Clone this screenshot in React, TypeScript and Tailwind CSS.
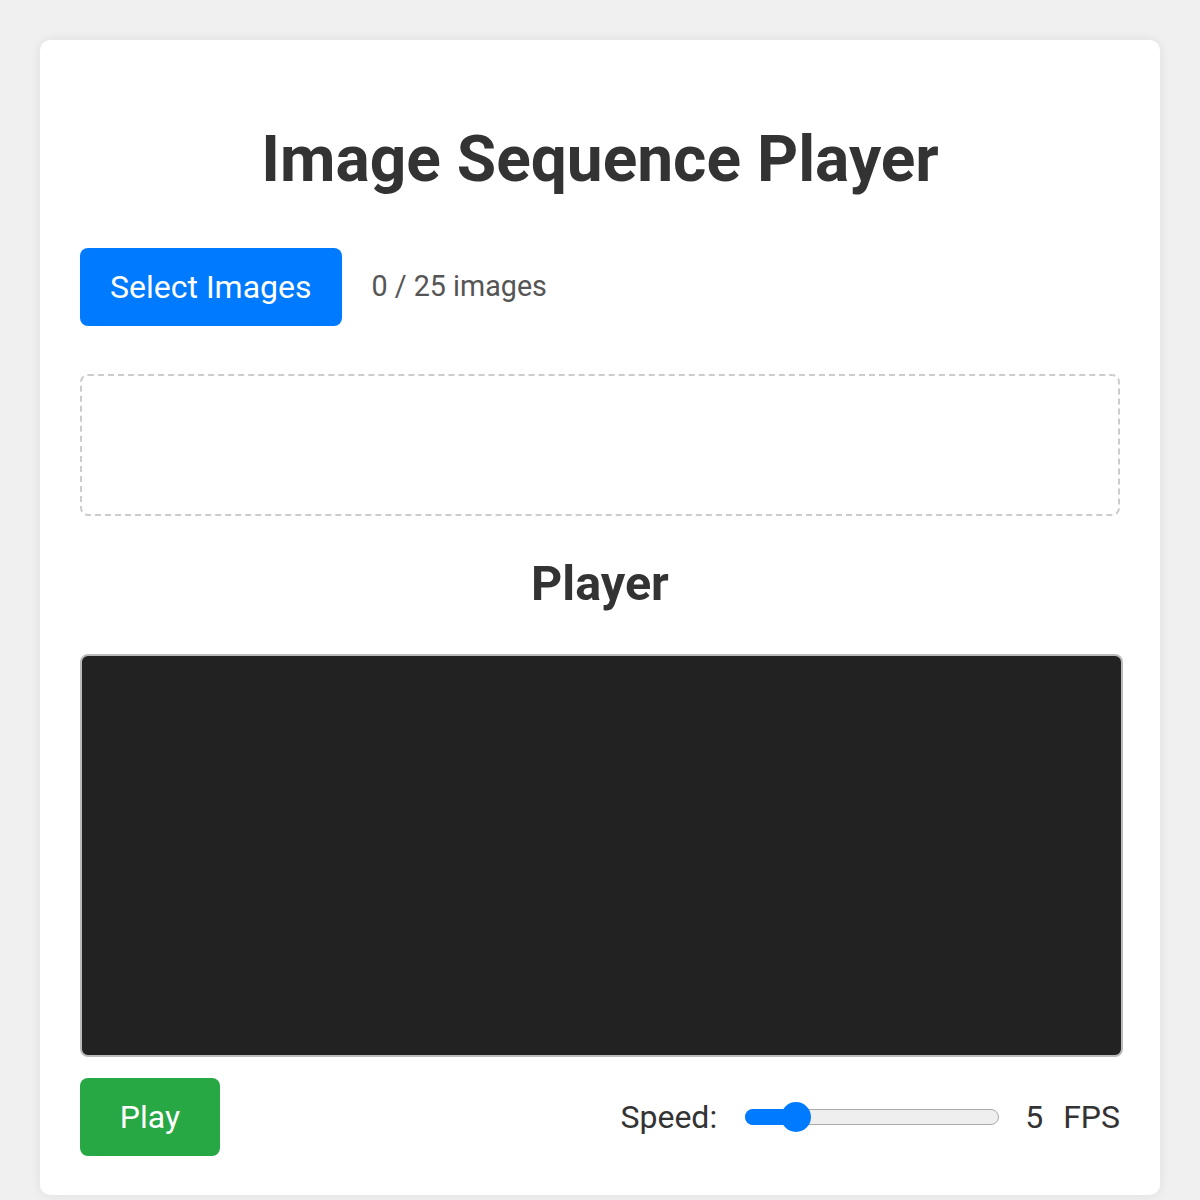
export default function App() {
  const value = 5;
  const pct = ((value - 1) / (30 - 1)) * 100;

  return (
    <div className="min-h-[1200px] bg-[#f0f0f0] pt-10 px-10 font-['Roboto',sans-serif] text-[#333]">
      <div className="bg-white rounded-[10px] shadow-[0_0_12px_rgba(0,0,0,0.08)] px-10 pt-10 pb-[39px]">
        <h1 className="mt-10 h-[80px] flex items-center justify-center text-[64px] font-bold text-[#333]">
          Image Sequence Player
        </h1>

        <div className="mt-12 flex items-center gap-[30px]">
          <button className="h-[78px] px-[30px] rounded-[8px] bg-[#007bff] text-white text-[32px]">
            Select Images
          </button>
          <span className="text-[28.7px] text-[#555]">0 / 25 images</span>
        </div>

        <div className="mt-[48px] h-[142px] rounded-[8px] border-2 border-dashed border-[#ccc]" />

        <h2 className="mt-[38px] h-[60px] flex items-center justify-center text-[48.5px] font-bold text-[#333]">
          Player
        </h2>

        <div className="mt-10 h-[403px] mr-[-3px] rounded-[8px] border-2 border-[#bbb] bg-[#222]" />

        <div className="mt-[21px] flex items-center justify-between">
          <button className="h-[78px] w-[140px] rounded-[8px] bg-[#28a745] text-white text-[32px]">
            Play
          </button>
          <div className="flex items-center text-[32px] text-[#333]">
            <span>Speed:</span>
            <div className="relative ml-[28px] w-[254px] h-[16px] rounded-full border border-[#aaa] bg-[#efefef]">
              <div
                className="absolute left-[-1px] top-[-1px] h-[16px] rounded-full bg-[#007bff]"
                style={{ width: `calc(${pct}% * 0.89 + 19px)` }}
              />
              <div
                className="absolute top-1/2 -translate-y-1/2 -translate-x-1/2 w-[30px] h-[30px] rounded-full bg-[#007bff]"
                style={{ left: `calc(${pct}% * 0.89 + 19px)` }}
              />
            </div>
            <span className="ml-[26px]">5</span>
            <span className="ml-[20px]">FPS</span>
          </div>
        </div>
      </div>
    </div>
  );
}
